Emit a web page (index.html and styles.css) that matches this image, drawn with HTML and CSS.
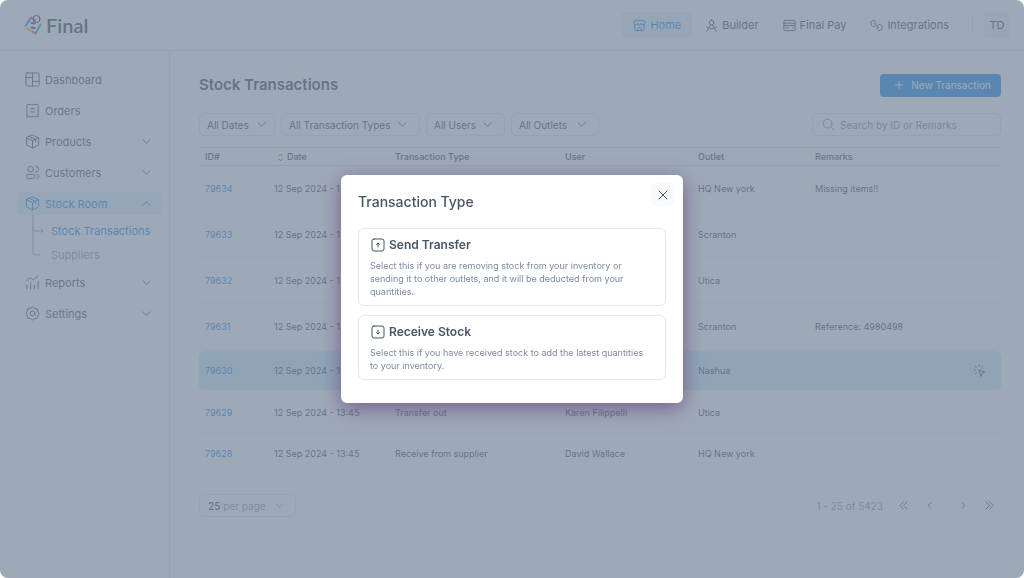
FILE: index.html
```html
<!DOCTYPE html>
<html lang="en">
<head>
    <meta charset="utf-8">
    <meta name="viewport" content="width=device-width, initial-scale=1">
    <title>Final - Stock Transactions</title>
    <link rel="stylesheet" href="styles.css">
</head>
<body>

<!-- shared icons -->
<svg class="sprite" aria-hidden="true">
    <symbol id="down" viewBox="0 0 10 10"><path d="M1 3l4 4 4-4"/></symbol>
    <symbol id="up" viewBox="0 0 10 10"><path d="M1 7l4-4 4 4"/></symbol>
    <symbol id="box" viewBox="0 0 16 16"><path d="M8 1l6.500 3v7.500L8 15l-6.500-3.500V4zM1.500 4L8 7l6.500-3M8 7v8M4.500 2.600L11.200 5.600v2.600"/></symbol>
</svg>

<div class="app">
    <header class="topbar">
        <a class="brand" href="#">
            <svg class="brand-mark" viewBox="0 0 18 22">
                <path d="M1.500 12L7 3.500" stroke="#1fa0f0"/>
                <path d="M7 3.500l4.500 3" stroke="#f0604a"/>
                <path d="M16.500 10.500l-5 9" stroke="#16c0c8"/>
                <path d="M11.500 19.500L7.500 17" stroke="#f0604a"/>
                <path d="M7.500 17L3 14.500" stroke="#f5c030"/>
                <circle cx="12.500" cy="5" r="3.500" stroke="#334155" stroke-width="1"/>
                <path d="M7.500 9l3 .500M7.500 13.500l3 .500" stroke="#7a30d0"/>
            </svg>
            <span>Final</span>
        </a>
        <nav class="topnav">
            <a class="current" href="#"><svg viewBox="0 0 14 14"><path d="M2.500 1.500h9l1.500 3a2 2 0 0 1-4 0 2 2 0 0 1-4 0 2 2 0 0 1-4 0zM2 7v4.500q0 1 1 1h8q1 0 1-1V7M5 12.500v-2q0-1 1-1h2q1 0 1 1v2"/></svg>Home</a>
            <a href="#"><svg viewBox="0 0 14 14"><circle cx="7" cy="4" r="2.500"/><path d="M7 .500v1M6 6.500L2 13M8 6.500l4 6.500M1.500 8.500c3 2.500 8 2.500 11 0"/></svg>Builder</a>
            <a href="#"><svg viewBox="0 0 14 14"><rect x="1" y="1.500" width="12" height="11" rx="1"/><path d="M1 4.500h12M1 7h12M3 9.500h3M10 9.500h1"/></svg>Final Pay</a>
            <a href="#"><svg viewBox="0 0 14 14"><path d="M5.500 7.500l-1 .500a2.300 2.300 0 0 1-3-1.200L1 5a2.300 2.300 0 0 1 1.200-3L3 1.600a2.300 2.300 0 0 1 3 1.200L6.500 4.500M8.500 6.500l1-.500a2.300 2.300 0 0 1 3 1.200L13 9a2.300 2.300 0 0 1-1.200 3l-.800.400a2.300 2.300 0 0 1-3-1.200L7.500 9.500M4.500 4.500l5 5"/></svg>Integrations</a>
        </nav>
        <div class="account"><button class="avatar" type="button">TD</button></div>
    </header>

    <div class="body">
        <aside class="sidebar">
            <a href="#"><svg viewBox="0 0 16 16"><rect x="1" y="1" width="14" height="14" rx="1.500"/><path d="M8 1v14M1 6h7M8 10h7"/></svg>Dashboard</a>
            <a href="#"><svg viewBox="0 0 16 16"><path d="M2 15V2.500q0-1 1-1h10q1 0 1 1V15l-2-1-2 1-2-1-2 1-2-1zM6 6h4M6 9.500h4"/></svg>Orders</a>
            <a href="#"><svg><use href="#box"/></svg>Products<svg class="chevron"><use href="#down"/></svg></a>
            <a href="#"><svg viewBox="0 0 16 16"><circle cx="6" cy="4.500" r="3"/><rect x="1.500" y="10" width="9" height="4.500" rx="2.200"/><path d="M11.500 1.500a3 3 0 0 1 0 6M12.500 10a2.200 2.200 0 0 1 0 4.500"/></svg>Customers<svg class="chevron"><use href="#down"/></svg></a>
            <a class="current" href="#"><svg><use href="#box"/></svg>Stock Room<svg class="chevron"><use href="#up"/></svg></a>
            <div class="submenu">
                <svg viewBox="0 0 12 42"><path d="M1 0v37q0 3 3 3h4M1 12q0 4 3 4h7M9 14.500l2 1.500-2 1.500"/></svg>
                <div>
                    <a class="current" href="#">Stock Transactions</a>
                    <a href="#">Suppliers</a>
                </div>
            </div>
            <a href="#"><svg viewBox="0 0 16 16"><path d="M2 15v-4M6 15V8.500M10 15v-4M14 15V7M1.500 6.500L5 3l4 2 5-4"/></svg>Reports<svg class="chevron"><use href="#down"/></svg></a>
            <a href="#"><svg viewBox="0 0 16 16"><circle cx="8" cy="8" r="2.700"/><path d="M6 2.500L8 1l2 1.500 2.800.200.700 2.800L15 8l-1.500 2.500-.700 2.800-2.800.200L8 15l-2-1.500-2.800-.200-.700-2.800L1 8l1.500-2.500.700-2.800z"/></svg>Settings<svg class="chevron"><use href="#down"/></svg></a>
        </aside>

        <main class="content">
            <div class="heading">
                <h1>Stock Transactions</h1>
                <button class="primary" type="button"><svg viewBox="0 0 8 8"><path d="M4 .500v7M.500 4h7"/></svg>New Transaction</button>
            </div>

            <div class="filters">
                <select class="dates" aria-label="Dates"><option>All Dates</option></select>
                <select class="types" aria-label="Transaction types"><option>All Transaction Types</option></select>
                <select class="users" aria-label="Users"><option>All Users</option></select>
                <select class="outlets" aria-label="Outlets"><option>All Outlets</option></select>
                <label class="search">
                    <svg viewBox="0 0 14 14"><circle cx="6" cy="6" r="4.800"/><path d="M10 10l3 3"/></svg>
                    <input type="search" placeholder="Search by ID or Remarks" aria-label="Search">
                </label>
            </div>

            <table>
                <colgroup><col class="c-id"><col class="c-date"><col class="c-type"><col class="c-user"><col class="c-outlet"><col></colgroup>
                <thead>
                    <tr><th>ID#</th><th><svg class="sort" viewBox="0 0 6 10"><path d="M1 3l2-2 2 2M1 7l2 2 2-2"/></svg>Date</th><th>Transaction Type</th><th>User</th><th>Outlet</th><th>Remarks</th></tr>
                </thead>
                <tbody>
                    <tr><td><a href="#">79634</a></td><td>12 Sep 2024 - 13:45</td><td></td><td></td><td>HQ New york</td><td>Missing items!!</td></tr>
                    <tr><td><a href="#">79633</a></td><td>12 Sep 2024 - 13:45</td><td></td><td></td><td>Scranton</td><td></td></tr>
                    <tr><td><a href="#">79632</a></td><td>12 Sep 2024 - 13:45</td><td></td><td></td><td>Utica</td><td></td></tr>
                    <tr><td><a href="#">79631</a></td><td>12 Sep 2024 - 13:45</td><td></td><td></td><td>Scranton</td><td>Reference: 4980498</td></tr>
                    <tr class="hover"><td><a href="#">79630</a></td><td>12 Sep 2024 - 13:45</td><td></td><td></td><td>Nashua</td><td><svg class="click" viewBox="0 0 14 14"><path d="M6.500 6.500l6 2-2.500 1.500-1.200 3zM6.500 1v1.500M2.500 2.500l1 1M10.500 2.500l-1 1M1 6.500h1.500M2.500 10.500l1-1"/></svg></td></tr>
                    <tr class="short"><td><a href="#">79629</a></td><td>12 Sep 2024 - 13:45</td><td>Transfer out</td><td>Karen Filippelli</td><td>Utica</td><td></td></tr>
                    <tr class="short"><td><a href="#">79628</a></td><td>12 Sep 2024 - 13:45</td><td>Receive from supplier</td><td>David Wallace</td><td>HQ New york</td><td></td></tr>
                </tbody>
            </table>

            <div class="paging">
                <button class="per-page" type="button"><b>25</b> per page<svg class="chevron"><use href="#down"/></svg></button>
                <span class="range">1 - 25 of 5423</span>
                <button type="button" aria-label="First page"><svg viewBox="0 0 10 10"><path d="M5 1L1 5l4 4M9 1L5 5l4 4"/></svg></button>
                <button type="button" aria-label="Previous page"><svg viewBox="0 0 10 10"><path d="M6.500 2l-3 3 3 3"/></svg></button>
                <button class="next" type="button" aria-label="Next page"><svg viewBox="0 0 10 10"><path d="M3.500 2l3 3-3 3"/></svg></button>
                <button type="button" aria-label="Last page"><svg viewBox="0 0 10 10"><path d="M1 1l4 4-4 4M5 1l4 4-4 4"/></svg></button>
            </div>
        </main>
    </div>
</div>

<div class="overlay">
    <div class="modal" role="dialog" aria-modal="true" aria-labelledby="modal-title">
        <h2 id="modal-title">Transaction Type</h2>
        <button class="close" type="button" aria-label="Close"><svg viewBox="0 0 10 10"><path d="M1 1l8 8M9 1L1 9"/></svg></button>
        <button class="choice" type="button">
            <strong><svg viewBox="0 0 14 14"><rect x="1" y="1" width="12" height="12" rx="2"/><path d="M7 9V5M5.500 6.500L7 5l1.500 1.500"/></svg>Send Transfer</strong>
            <span>Select this if you are removing stock from your inventory or sending it to other outlets, and it will be deducted from your quantities.</span>
        </button>
        <button class="choice" type="button">
            <strong><svg viewBox="0 0 14 14"><rect x="1" y="1" width="12" height="12" rx="2"/><path d="M7 5v4M5.500 7.500L7 9l1.500-1.500"/></svg>Receive Stock</strong>
            <span>Select this if you have received stock to add the latest quantities to your inventory.</span>
        </button>
    </div>
</div>

</body>
</html>
```
FILE: styles.css
```css
* { box-sizing: border-box; margin: 0; padding: 0; }

body {
    background: #fff;
    color: #475569;
    font: 11px/16px Inter, "Open Sans", sans-serif;
}
a { color: inherit; text-decoration: none; }
button, input, select { font: inherit; color: inherit; border: 0; background: none; }
svg { fill: none; stroke: currentColor; stroke-width: 1; stroke-linecap: round; stroke-linejoin: round; flex: none; }
.sprite { display: none; }

.app { min-height: 100vh; display: flex; flex-direction: column; }

/* top bar */
.topbar {
    display: flex;
    align-items: center;
    height: 51px;
    padding: 0 14px 0 24px;
    border-bottom: 1px solid #e2e6ec;
}
.brand { display: flex; align-items: center; gap: 4px; font: 600 20px/24px Lato, sans-serif; }
.brand-mark { width: 18px; height: 22px; stroke-width: 2; }
.topnav { display: flex; gap: 2px; margin-left: auto; }
.topnav a { display: flex; align-items: center; gap: 4px; height: 26px; padding: 0 11px; border-radius: 4px; }
.topnav svg { width: 13px; height: 13px; }
.topnav .current { background: #e6f4ff; color: #2492eb; }
.account { display: flex; align-items: center; margin-left: 12px; }
.account::before { content: ""; width: 1px; height: 16px; margin-right: 11px; background: #dde2ea; }
.avatar { width: 26px; height: 26px; border-radius: 4px; background: #f1f3f7; }

.body { display: flex; flex: 1; }

/* side menu */
.sidebar { width: 170px; padding: 17px 7px 0 17px; border-right: 1px solid #e2e6ec; color: #525f73; }
.sidebar > a { display: flex; align-items: center; gap: 5px; height: 23px; margin-bottom: 8px; padding: 0 11px 0 8px; border-radius: 3px; }
.sidebar > a > svg { width: 15px; height: 15px; }
.sidebar > a.current { background: #e9f5ff; color: #2492eb; margin-bottom: 0; }
.sidebar > a > .chevron { width: 9px; height: 9px; margin-left: auto; }
.submenu { display: flex; gap: 7px; padding-left: 15px; height: 56px; color: #94a3b8; }
.submenu svg { width: 12px; height: 42px; }
.submenu a { display: block; height: 24px; padding-top: 8px; line-height: 16px; }
.submenu a.current { color: #2492eb; }

/* transactions */
.content { flex: 1; padding: 22px 23px 0 29px; }
.heading { display: flex; align-items: center; justify-content: space-between; }
h1 { font-size: 15px; line-height: 24px; font-weight: 600; }
.primary { display: flex; align-items: center; justify-content: center; gap: 8px; width: 121px; height: 23px; padding-left: 5px; border-radius: 4px; background: #2492eb; color: #fff; font-size: 10px; }
.primary svg { width: 8px; height: 8px; }

.filters { display: flex; gap: 6px; margin: 16px 0 11px; }
.filters select, .search, .per-page { height: 23px; border: 1px solid #e2e7ee; border-radius: 5px; font-size: 10px; }
.filters select {
    appearance: none;
    padding: 0 7px;
    background: url("data:image/svg+xml,%3Csvg xmlns='http://www.w3.org/2000/svg' viewBox='0 0 10 10' fill='none' stroke='%23475569' stroke-linecap='round'%3E%3Cpath d='M1 3l4 4 4-4'/%3E%3C/svg%3E") no-repeat right 12px center / 9px 9px;
}
.filters .dates { width: 76px; background-position: right 8px center; }
.types { width: 139px; }
.users { width: 79px; }
.outlets { width: 88px; }
.search { display: flex; align-items: center; gap: 5px; width: 189px; margin-left: auto; padding: 0 9px; color: #8794a7; }
.search svg { width: 13px; height: 13px; }
.search input { flex: 1; min-width: 0; outline: 0; }
.search input::placeholder { color: #8794a7; }

table { width: 100%; table-layout: fixed; border-collapse: separate; border-spacing: 0; font-size: 9px; line-height: 12px; }
.c-id { width: 69px; }
.c-date { width: 121px; }
.c-type { width: 170px; }
.c-user { width: 133px; }
.c-outlet { width: 117px; }
th { height: 19px; padding: 0 6px; text-align: left; font-weight: 500; border-top: 1px solid #dde2ea; border-bottom: 1px solid #dde2ea; }
td { height: 46px; padding: 0 6px; border-bottom: 1px solid #f4f6f9; white-space: nowrap; }
td a { color: #2492eb; }
.sort { width: 5px; height: 9px; margin: 0 4px; vertical-align: middle; }
/* the clear borders keep the highlight off its neighbours */
.hover td { height: 43px; border: solid transparent; border-width: 1px 0 3px; background: #d3edfb; background-clip: padding-box; }
.hover td:first-child { border-radius: 6px 0 0 6px; }
.hover td:last-child { border-radius: 0 6px 6px 0; }
.short td { height: 41px; }
.click { display: block; width: 13px; height: 13px; margin: 0 9px 0 auto; }

.paging { display: flex; align-items: center; margin-top: 19px; padding-right: 7px; }
.per-page { display: flex; align-items: center; gap: 3px; width: 97px; padding: 0 11px 0 8px; color: #94a3b8; }
.per-page b { color: #475569; font-weight: 500; }
.per-page .chevron { margin-left: auto; width: 9px; height: 9px; }
.range { margin: 0 16px 0 auto; color: #94a3b8; font-size: 10px; }
.paging button svg { display: block; width: 9px; height: 9px; }
.paging button + button { margin-left: 17px; }
.paging .next { margin-left: 25px; }

/* dialog */
.overlay {
    position: fixed;
    inset: 0;
    display: flex;
    align-items: center;
    justify-content: center;
    border-radius: 8px;
    background: rgba(114, 131, 150, .69);
}
.modal { position: relative; width: 342px; padding: 17px 17px 23px; border-radius: 6px; background: #fff; box-shadow: 0 5px 20px rgba(88, 45, 110, .6); }
h2 { margin-bottom: 16px; font-size: 14px; line-height: 20px; font-weight: 500; }
.close { position: absolute; top: 8px; right: 9px; width: 23px; height: 23px; border-radius: 4px; background: #f8fafc; }
.close svg { display: block; width: 10px; height: 10px; margin: auto; }
.choice { display: block; width: 100%; padding: 8px 21px 7px 11px; border: 1px solid #e5e7ef; border-radius: 6px; text-align: left; }
.choice + .choice { margin-top: 9px; }
.choice strong { display: flex; align-items: center; gap: 4px; margin-bottom: 6px; padding-left: 1px; font-size: 12px; line-height: 16px; font-weight: 600; }
.choice strong svg { width: 14px; height: 14px; }
.choice span { display: block; color: #7b8ba1; font-size: 9px; line-height: 13px; }
```
